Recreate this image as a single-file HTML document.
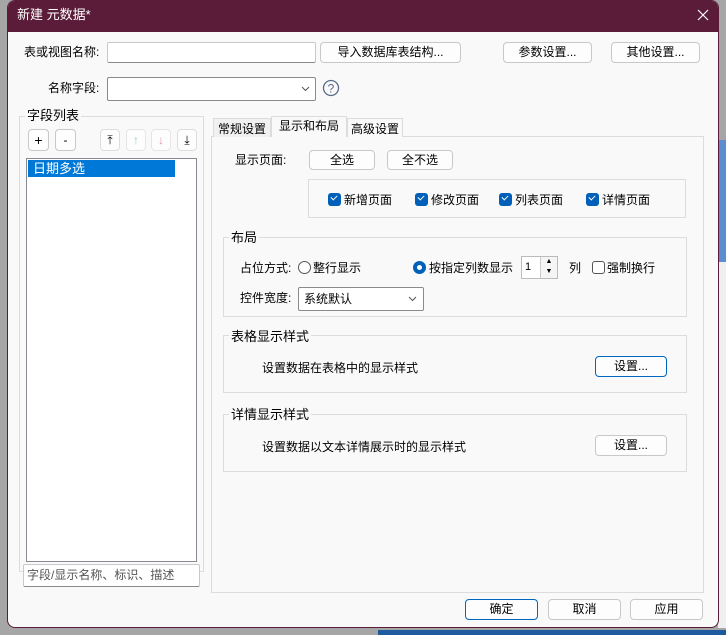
<!DOCTYPE html>
<html><head><meta charset="utf-8"><style>
*{box-sizing:border-box;margin:0;padding:0}
body{width:726px;height:635px;overflow:hidden;background:#a6a6a6;font-family:"Liberation Sans","Noto Sans CJK SC",sans-serif;font-size:12px;color:#000;position:relative}
.a{position:absolute}
.t{position:absolute;white-space:nowrap;line-height:14px}
.btn{position:absolute;border:1px solid #c8c8c8;border-radius:4px;background:#fdfdfd;text-align:center;line-height:18px;font-size:12px}
.inp{position:absolute;border:1px solid #c9c9c9;border-bottom-color:#8a8a8a;background:#fff;border-radius:2px}
.grp{position:absolute;border:1px solid #dcdcdc}
.gl{position:absolute;background:#f9f9f9;padding:0 2px;line-height:14px;white-space:nowrap;font-size:13px}
.cb{position:absolute;width:13px;height:13px;background:#005fb8;border-radius:3px}
.cb:after{content:"";position:absolute;left:3px;top:2px;width:5px;height:3px;border-left:1.3px solid #fff;border-bottom:1.3px solid #fff;transform:rotate(-45deg)}
</style></head><body>
<div class="a" style="left:718px;top:140px;width:8px;height:122px;background:#5b8dcf"></div>
<div class="a" style="left:718px;top:262px;width:8px;height:366px;background:#f0f0f0"></div>
<div class="a" style="left:378px;top:630px;width:348px;height:5px;background:#1e5aa0"></div>
<div class="a" style="left:7px;top:0;width:712px;height:628px;background:#f9f9f9;border:1px solid #5b1c39;border-radius:8px;overflow:hidden">
<div class="a" style="left:0;top:0;width:712px;height:31px;background:#5b1c39"></div>
</div>
<div class="t" style="left:17px;top:8px;color:#fff;font-size:13px">新建 元数据*</div>
<svg class="a" style="left:697px;top:9px" width="12" height="12"><path d="M1 1L11 11M11 1L1 11" stroke="#fff" stroke-width="1.2"/></svg>

<div class="t" style="left:24px;top:45px">表或视图名称:</div>
<div class="inp" style="left:107px;top:42px;width:209px;height:21px"></div>
<div class="btn" style="left:320px;top:42px;width:141px;height:21px">导入数据库表结构...</div>
<div class="btn" style="left:503px;top:42px;width:89px;height:21px">参数设置...</div>
<div class="btn" style="left:611px;top:42px;width:89px;height:21px">其他设置...</div>

<div class="t" style="left:48px;top:81px">名称字段:</div>
<div class="inp" style="left:107px;top:77px;width:209px;height:24px;border-color:#8a8a8a"></div>
<svg class="a" style="left:301px;top:86px" width="9" height="6"><path d="M1 1L4.5 4.5L8 1" stroke="#555" fill="none"/></svg>
<svg class="a" style="left:322px;top:79px" width="18" height="18"><circle cx="9" cy="9" r="7.5" stroke="#5a6a8a" stroke-width="1.3" fill="none"/><text x="9" y="13.5" font-size="12" text-anchor="middle" fill="#5a6a8a" font-family="Liberation Sans">?</text></svg>

<div class="grp" style="left:19px;top:116px;width:185px;height:456px"></div>
<div class="gl" style="left:25px;top:109px">字段列表</div>
<div class="btn" style="left:28px;top:129px;width:21px;height:22px;line-height:20px;font-size:14px">+</div>
<div class="btn" style="left:55px;top:129px;width:21px;height:22px;line-height:20px">-</div>
<div class="btn" style="left:100px;top:129px;width:20px;height:22px;border-color:#ddd;line-height:20px">⤒</div>
<div class="btn" style="left:126px;top:129px;width:20px;height:22px;border-color:#e5e5e5;color:#9cc;line-height:20px">↑</div>
<div class="btn" style="left:151px;top:129px;width:20px;height:22px;border-color:#e5e5e5;color:#d9a;line-height:20px">↓</div>
<div class="btn" style="left:177px;top:129px;width:20px;height:22px;border-color:#ddd;line-height:20px">⤓</div>
<div class="a" style="left:26px;top:158px;width:171px;height:404px;background:#fff;border:1px solid #868a92"></div>
<div class="t" style="left:28px;top:160px;width:147px;height:17px;background:#0078d7;color:#fff;padding-left:5px;line-height:17px;font-size:13px">日期多选</div>
<div class="inp" style="left:23px;top:564px;width:177px;height:23px;color:#555;padding:3px 3px;line-height:15px">字段/显示名称、标识、描述</div>

<div class="a" style="left:211px;top:136px;width:493px;height:457px;border:1px solid #dcdcdc;background:#f9f9f9"></div>
<div class="t" style="left:213px;top:118px;width:58px;height:19px;border:1px solid #dcdcdc;border-bottom:none;background:#f0f0f0;padding:3px 0 0 4px">常规设置</div>
<div class="t" style="left:271px;top:116px;width:76px;height:21px;border:1px solid #dcdcdc;border-bottom:none;background:#f9f9f9;padding:2px 0 0 7px">显示和布局</div>
<div class="t" style="left:347px;top:118px;width:56px;height:19px;border:1px solid #dcdcdc;border-bottom:none;background:#f9f9f9;padding:3px 0 0 3px">高级设置</div>

<div class="t" style="left:235px;top:153px">显示页面:</div>
<div class="btn" style="left:309px;top:150px;width:66px;height:20px">全选</div>
<div class="btn" style="left:387px;top:150px;width:66px;height:20px">全不选</div>
<div class="grp" style="left:308px;top:179px;width:378px;height:39px"></div>
<div class="cb" style="left:328px;top:193px"></div><div class="t" style="left:344px;top:193px">新增页面</div>
<div class="cb" style="left:415px;top:193px"></div><div class="t" style="left:431px;top:193px">修改页面</div>
<div class="cb" style="left:499px;top:193px"></div><div class="t" style="left:515px;top:193px">列表页面</div>
<div class="cb" style="left:586px;top:193px"></div><div class="t" style="left:602px;top:193px">详情页面</div>

<div class="grp" style="left:223px;top:237px;width:464px;height:80px"></div>
<div class="gl" style="left:229px;top:231px">布局</div>
<div class="t" style="left:240px;top:261px">占位方式:</div>
<div class="a" style="left:298px;top:261px;width:13px;height:13px;border:1px solid #555;border-radius:50%;background:#fff"></div>
<div class="t" style="left:313px;top:261px">整行显示</div>
<div class="a" style="left:413px;top:261px;width:13px;height:13px;border-radius:50%;background:#005fb8"><div class="a" style="left:4px;top:4px;width:5px;height:5px;border-radius:50%;background:#fff"></div></div>
<div class="t" style="left:429px;top:261px">按指定列数显示</div>
<div class="a" style="left:521px;top:256px;width:37px;height:23px;border:1px solid #bbb;background:#fff"></div>
<div class="t" style="left:525px;top:260px;font-size:11px">1</div>
<div class="a" style="left:540px;top:257px;width:17px;height:21px;border-left:1px solid #ccc;background:#f5f5f5;font-size:7px;text-align:center;line-height:10px">▲<br>▼</div>
<div class="t" style="left:569px;top:261px">列</div>
<div class="a" style="left:592px;top:261px;width:13px;height:13px;border:1px solid #555;border-radius:3px;background:#fff"></div>
<div class="t" style="left:607px;top:261px">强制换行</div>
<div class="t" style="left:240px;top:291px">控件宽度:</div>
<div class="inp" style="left:298px;top:287px;width:126px;height:24px;border-color:#8a8a8a;padding:4px 5px;line-height:14px">系统默认</div>
<svg class="a" style="left:408px;top:296px" width="9" height="6"><path d="M1 1L4.5 4.5L8 1" stroke="#555" fill="none"/></svg>

<div class="grp" style="left:223px;top:335px;width:464px;height:58px"></div>
<div class="gl" style="left:229px;top:330px">表格显示样式</div>
<div class="t" style="left:262px;top:361px">设置数据在表格中的显示样式</div>
<div class="btn" style="left:595px;top:356px;width:72px;height:21px;border-color:#0067c0">设置...</div>

<div class="grp" style="left:223px;top:414px;width:464px;height:58px"></div>
<div class="gl" style="left:229px;top:408px">详情显示样式</div>
<div class="t" style="left:262px;top:440px">设置数据以文本详情展示时的显示样式</div>
<div class="btn" style="left:595px;top:435px;width:72px;height:21px">设置...</div>

<div class="btn" style="left:465px;top:599px;width:73px;height:21px;border-color:#0067c0">确定</div>
<div class="btn" style="left:548px;top:599px;width:73px;height:21px">取消</div>
<div class="btn" style="left:630px;top:599px;width:73px;height:21px">应用</div>
</body></html>
